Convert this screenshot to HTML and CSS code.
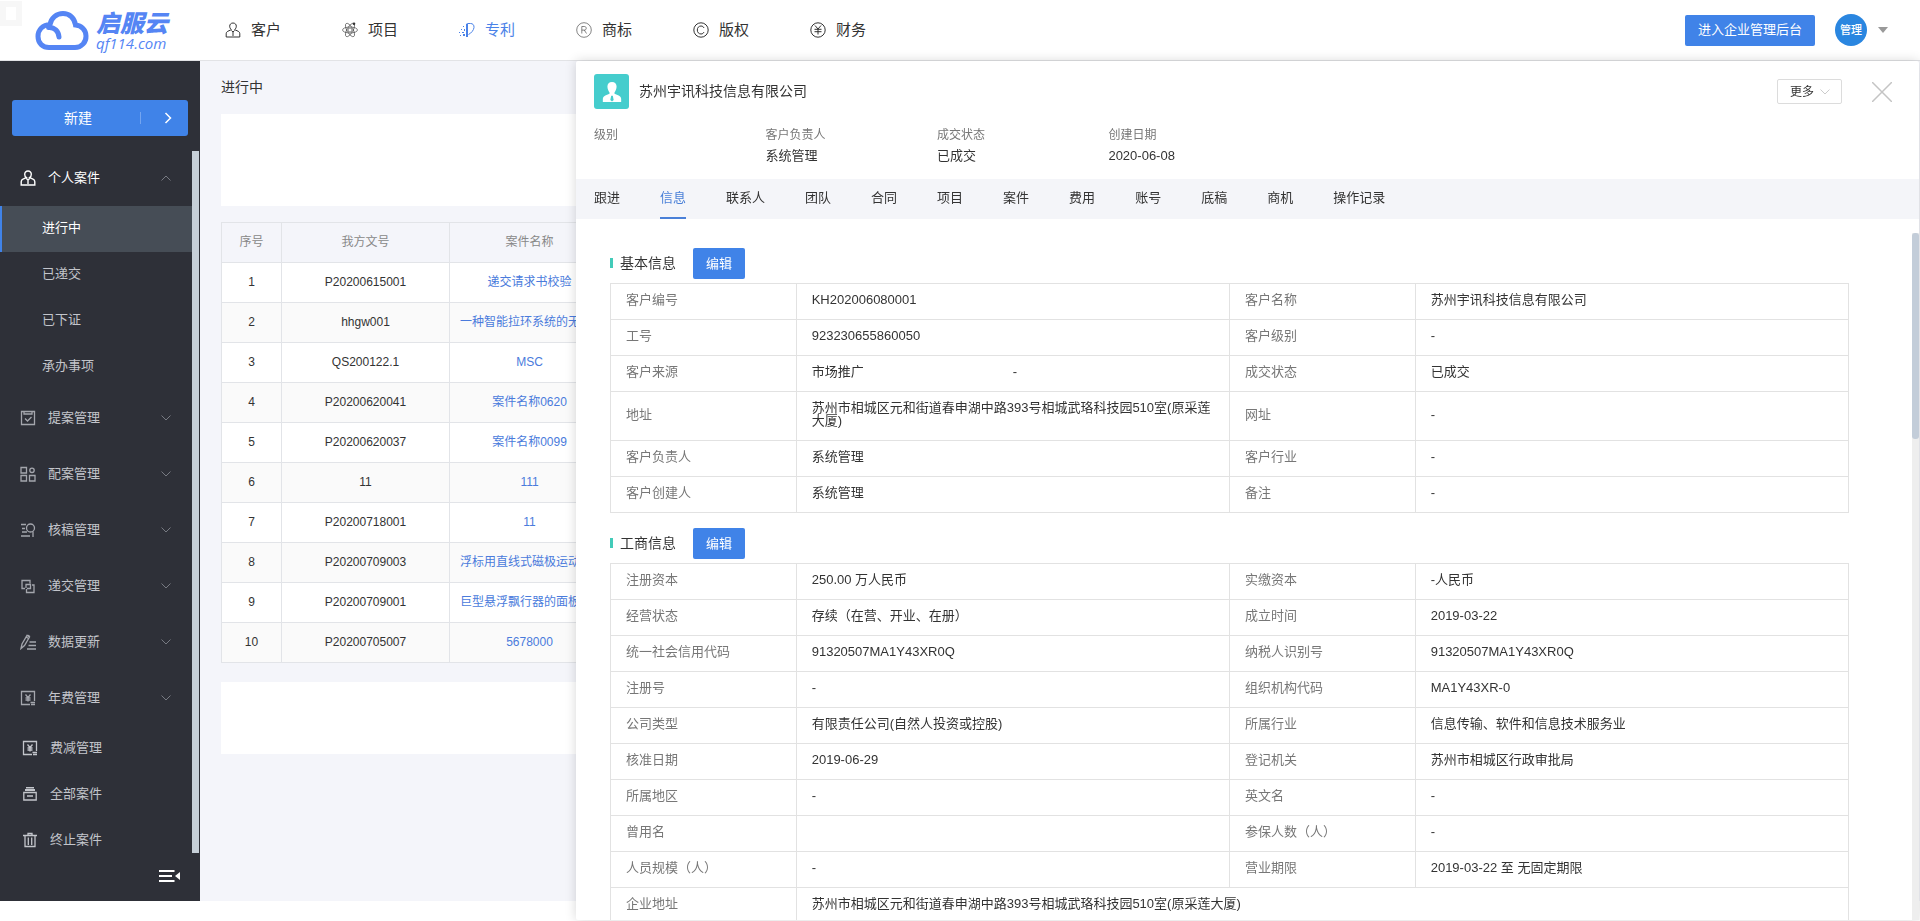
FILE: index.html
```html
<!DOCTYPE html>
<html lang="zh-CN">
<head>
<meta charset="utf-8">
<title>启服云</title>
<link rel="stylesheet" href="styles.css">
</head>
<body>
<svg class="sprite" aria-hidden="true">
  <symbol id="i-user" viewBox="0 0 16 16"><path d="M8 1C5.900 1 4.700 2.400 4.700 4.200c0 1.500.700 2.700 1.700 3.400L3 9.200c-1.100.5-1.800 1.300-1.800 2.600V15h13.600v-3.200c0-1.300-.7-2.100-1.800-2.600L9.600 7.600c1-.7 1.700-1.900 1.700-3.400C11.300 2.400 10.100 1 8 1zM6.400 8.500L8 10l1.600-1.500M8 10v4"/></symbol>
  <symbol id="i-down" viewBox="0 0 12 12"><path d="M1.500 3.500L6 8l4.500-4.500"/></symbol>
  <symbol id="i-yuan" viewBox="0 0 16 16"><path d="M14.500 11V1.500h-13v13H10M5.500 4.500L8 7.500l2.500-3M5.500 8h5M5.500 10h5M8 7.500v4M10.500 12.500H15M11 14.500h4"/></symbol>
</svg>

<header class="header">
  <span class="corner"></span>
  <a class="logo" href="#">
    <svg class="logo-cloud" viewBox="0 0 54 40"><path d="M14 36.500h26a11 11 0 0 0 11-11.500c0-6-4.500-10.500-10.500-11C39.500 7 34.500 2.500 28 2.500S16 7 15 13.500C8 14 3 18.500 3 25.500S8 36.500 14 36.500zM13.500 16.500c6-.5 10 3.500 10.500 9.500"/></svg>
    <span class="logo-text"><b>启服云</b><i>qf114.com</i></span>
  </a>
  <nav class="nav">
    <a href="#"><svg class="icon"><use href="#i-user"/></svg>客户</a>
    <a href="#"><svg class="icon thin" viewBox="0 0 16 16"><circle cx="8" cy="8" r="2"/><ellipse cx="8" cy="8" rx="7.500" ry="3"/><ellipse cx="8" cy="8" rx="7.500" ry="3" transform="rotate(60 8 8)"/><ellipse cx="8" cy="8" rx="7.500" ry="3" transform="rotate(120 8 8)"/><circle class="solid" cx="12" cy="1.800" r="1.300"/></svg>项目</a>
    <a href="#" class="active"><svg class="icon" viewBox="0 0 16 16"><path class="solid" d="M7 2l2-1v14H7zM4 4h1v1H4zM2 7h1v1H2zM5 7h1v2H5zM3 10h2v1H3zM0 10h1v1H0zM4 12h2v2H4zM1 13h1v1H1z"/><path d="M9 1.500h2.500c2.300 0 3.700 1.500 3.500 4-.3 2.600-2.500 5.500-5.500 7"/></svg>专利</a>
    <a href="#"><svg class="icon thin" viewBox="0 0 16 16"><circle cx="8" cy="8" r="7.300"/><path d="M5.800 11.500v-7h2.700c2.300 0 2.300 3.600 0 3.600H5.800M8.300 8.100l2.200 3.400"/></svg>商标</a>
    <a href="#"><svg class="icon" viewBox="0 0 16 16"><circle cx="8" cy="8" r="7.200"/><path d="M11 6C10.500 4.800 9.400 4 8 4 5.800 4 4.300 5.700 4.300 8S5.800 12 8 12c1.400 0 2.500-.8 3-2"/></svg>版权</a>
    <a href="#"><svg class="icon" viewBox="0 0 16 16"><circle cx="8" cy="8" r="7.200"/><path d="M5 3.500l3 3.500 3-3.500M4.500 7.300h7M4.500 9.700h7M8 7v5.500"/></svg>财务</a>
  </nav>
  <button class="btn enter" type="button">进入企业管理后台</button>
  <button class="account" type="button"><span class="avatar">管理</span><svg class="caret" viewBox="0 0 10 6"><path d="M0 0h10L5 6z"/></svg></button>
</header>

<div class="layout">
  <aside class="sidebar">
    <button class="create" type="button"><span>新建</span><svg class="chev" viewBox="0 0 12 12"><path d="M3.500 1L8.500 6l-5 5"/></svg></button>
    <div class="menu-wrap">
      <nav class="menu">
        <a class="group open" href="#"><svg class="icon"><use href="#i-user"/></svg><span>个人案件</span><svg class="arrow up"><use href="#i-down"/></svg></a>
        <a class="sub current" href="#">进行中</a>
        <a class="sub" href="#">已递交</a>
        <a class="sub" href="#">已下证</a>
        <a class="sub" href="#">承办事项</a>
        <a class="group" href="#"><svg class="icon" viewBox="0 0 16 16"><path d="M1.500 1.500h13v13h-13zM4 1v3h8V1M5 8.500L7.500 11l4-4"/></svg><span>提案管理</span><svg class="arrow"><use href="#i-down"/></svg></a>
        <a class="group" href="#"><svg class="icon" viewBox="0 0 16 16"><path d="M1 1.500h5.500V7H1zM1 9.500h5.500V15H1zM9.500 9.500H15V15H9.500z"/><circle cx="12" cy="4.300" r="2.200"/></svg><span>配案管理</span><svg class="arrow"><use href="#i-down"/></svg></a>
        <a class="group" href="#"><svg class="icon" viewBox="0 0 16 16"><circle cx="10.500" cy="6" r="4"/><path d="M1 2.500h5M2 6.500h3M2 10h5M1 14h9M13 9.500V15"/></svg><span>核稿管理</span><svg class="arrow"><use href="#i-down"/></svg></a>
        <a class="group" href="#"><svg class="icon" viewBox="0 0 16 16"><path d="M5 10.500H2v-8h8v3M7 10.500h3.500V6.500H6V10M12 7h2v7.500H6.500V11"/></svg><span>递交管理</span><svg class="arrow"><use href="#i-down"/></svg></a>
        <a class="group" href="#"><svg class="icon" viewBox="0 0 16 16"><path d="M1 14.500l1-4.500 5-8.500 2.500 1.500-5 8.500zM6 3l2.500 1.500M7.500 1l2.500 1.500M9.500 8H16M8.500 11.500H16M7 15h9"/></svg><span>数据更新</span><svg class="arrow"><use href="#i-down"/></svg></a>
        <a class="group" href="#"><svg class="icon"><use href="#i-yuan"/></svg><span>年费管理</span><svg class="arrow"><use href="#i-down"/></svg></a>
        <a class="single" href="#"><svg class="icon"><use href="#i-yuan"/></svg><span>费减管理</span></a>
        <a class="single" href="#"><svg class="icon" viewBox="0 0 16 16"><path class="solid" d="M4 1h8v1.500H4zM3 3h10v2H3z"/><path d="M1.800 6.500h12.400v7.500H1.800zM5 10h6"/></svg><span>全部案件</span></a>
        <a class="single" href="#"><svg class="icon" viewBox="0 0 16 16"><path d="M1 3.500h14M6 3V1.500h4V3M3 4v10.500h10V4M6.300 5.500V13M9.700 5.500V13"/></svg><span>终止案件</span></a>
      </nav>
      <div class="menu-bar"></div>
    </div>
    <button class="fold" type="button" aria-label="收起菜单"><svg viewBox="0 0 22 14"><path d="M0 2h15.500M0 7h13M0 12h15.500"/><path class="solid" d="M21 3v8l-5-4z"/></svg></button>
  </aside>

  <main class="main">
    <h1>进行中</h1>
    <div class="card filter"></div>
    <table class="cases">
      <colgroup><col class="c-no"><col class="c-ref"><col class="c-name"><col></colgroup>
      <thead><tr><th>序号</th><th>我方文号</th><th>案件名称</th><th></th></tr></thead>
      <tbody>
        <tr><td>1</td><td>P20200615001</td><td><a href="#">递交请求书校验</a></td><td></td></tr>
        <tr><td>2</td><td>hhgw001</td><td><a href="#">一种智能拉环系统的无人机</a></td><td></td></tr>
        <tr><td>3</td><td>QS200122.1</td><td><a href="#">MSC</a></td><td></td></tr>
        <tr><td>4</td><td>P20200620041</td><td><a href="#">案件名称0620</a></td><td></td></tr>
        <tr><td>5</td><td>P20200620037</td><td><a href="#">案件名称0099</a></td><td></td></tr>
        <tr><td>6</td><td>11</td><td><a href="#">111</a></td><td></td></tr>
        <tr><td>7</td><td>P20200718001</td><td><a href="#">11</a></td><td></td></tr>
        <tr><td>8</td><td>P20200709003</td><td><a href="#">浮标用直线式磁极运动发电</a></td><td></td></tr>
        <tr><td>9</td><td>P20200709001</td><td><a href="#">巨型悬浮飘行器的面板连接</a></td><td></td></tr>
        <tr><td>10</td><td>P20200705007</td><td><a href="#">5678000</a></td><td></td></tr>
      </tbody>
    </table>
    <div class="card pager"></div>
  </main>
</div>

<section class="drawer">
  <div class="drawer-head">
    <span class="badge"><svg viewBox="0 0 22 24"><path d="M11 0C7.500 0 5.500 2.200 5.500 5.500c0 2.800 1.200 5.500 2.500 7v1.500l-5 2.200C1 17.200 0 18.500 0 20.500V24h22v-3.500c0-2-1-3.300-3-4.300L14 14v-1.500c1.300-1.500 2.500-4.200 2.500-7C16.500 2.200 14.500 0 11 0z"/><path class="tie" d="M10 16.500h2l1 5-2 2-2-2z"/></svg></span>
    <h2>苏州宇讯科技信息有限公司</h2>
    <button class="more" type="button">更多<svg viewBox="0 0 12 12"><path d="M1.500 3.500L6 8l4.500-4.500"/></svg></button>
    <button class="close" type="button" aria-label="关闭"><svg viewBox="0 0 20 20"><path d="M0 0l20 20M20 0L0 20"/></svg></button>
  </div>
  <dl class="summary">
    <div><dt>级别</dt><dd></dd></div>
    <div><dt>客户负责人</dt><dd>系统管理</dd></div>
    <div><dt>成交状态</dt><dd>已成交</dd></div>
    <div><dt>创建日期</dt><dd>2020-06-08</dd></div>
  </dl>
  <nav class="tabs">
    <a href="#">跟进</a><a href="#" class="active">信息</a><a href="#">联系人</a><a href="#">团队</a><a href="#">合同</a><a href="#">项目</a><a href="#">案件</a><a href="#">费用</a><a href="#">账号</a><a href="#">底稿</a><a href="#">商机</a><a href="#">操作记录</a>
  </nav>
  <div class="body">
    <div class="content">
      <div class="section-head"><h3>基本信息</h3><button class="btn" type="button">编辑</button></div>
      <table class="info">
        <colgroup><col class="k"><col class="v"><col class="k"><col class="v"></colgroup>
        <tr><th>客户编号</th><td>KH202006080001</td><th>客户名称</th><td>苏州宇讯科技信息有限公司</td></tr>
        <tr><th>工号</th><td>923230655860050</td><th>客户级别</th><td>-</td></tr>
        <tr><th>客户来源</th><td><div class="pair"><span>市场推广</span><span>-</span></div></td><th>成交状态</th><td>已成交</td></tr>
        <tr><th>地址</th><td>苏州市相城区元和街道春申湖中路393号相城武珞科技园510室(原采莲大厦)</td><th>网址</th><td>-</td></tr>
        <tr><th>客户负责人</th><td>系统管理</td><th>客户行业</th><td>-</td></tr>
        <tr><th>客户创建人</th><td>系统管理</td><th>备注</th><td>-</td></tr>
      </table>
      <div class="section-head"><h3>工商信息</h3><button class="btn" type="button">编辑</button></div>
      <table class="info">
        <colgroup><col class="k"><col class="v"><col class="k"><col class="v"></colgroup>
        <tr><th>注册资本</th><td>250.00 万人民币</td><th>实缴资本</th><td>-人民币</td></tr>
        <tr><th>经营状态</th><td>存续（在营、开业、在册）</td><th>成立时间</th><td>2019-03-22</td></tr>
        <tr><th>统一社会信用代码</th><td>91320507MA1Y43XR0Q</td><th>纳税人识别号</th><td>91320507MA1Y43XR0Q</td></tr>
        <tr><th>注册号</th><td>-</td><th>组织机构代码</th><td>MA1Y43XR-0</td></tr>
        <tr><th>公司类型</th><td>有限责任公司(自然人投资或控股)</td><th>所属行业</th><td>信息传输、软件和信息技术服务业</td></tr>
        <tr><th>核准日期</th><td>2019-06-29</td><th>登记机关</th><td>苏州市相城区行政审批局</td></tr>
        <tr><th>所属地区</th><td>-</td><th>英文名</th><td>-</td></tr>
        <tr><th>曾用名</th><td></td><th>参保人数（人）</th><td>-</td></tr>
        <tr><th>人员规模（人）</th><td>-</td><th>营业期限</th><td>2019-03-22 至 无固定期限</td></tr>
        <tr><th>企业地址</th><td colspan="3">苏州市相城区元和街道春申湖中路393号相城武珞科技园510室(原采莲大厦)</td></tr>
      </table>
    </div>
    <div class="scroll"><div class="thumb"></div></div>
  </div>
</section>
</body>
</html>
```

FILE: styles.css
```css
* { box-sizing: border-box; }
body {
  margin: 0;
  height: 100vh;
  overflow: hidden;
  font: 13px/20px "Liberation Sans", "Noto Sans CJK SC", sans-serif;
  color: #333;
  background: #fff;
}
a { color: inherit; text-decoration: none; }
button { font: inherit; color: inherit; border: 0; padding: 0; background: none; cursor: pointer; }
h1, h2, h3, dl, dd { margin: 0; font-weight: 400; }
svg { fill: none; stroke: currentColor; flex: none; }
.solid { fill: currentColor; stroke: none; }
.sprite { position: absolute; width: 0; height: 0; }
.icon { width: 16px; height: 16px; }
.thin { stroke-width: 0.6; }
.btn {
  height: 31px;
  padding: 0 13px;
  border-radius: 2px;
  background: #4083e8;
  color: #fff;
}

.header {
  position: relative;
  display: flex;
  align-items: center;
  height: 61px;
  padding-right: 32px;
  border-bottom: 1px solid #e2e3e6;
}
.corner {
  position: absolute;
  left: 0;
  top: 1px;
  width: 22px;
  height: 25px;
  border: 6px solid #f7f7f7;
}
.logo { display: flex; align-items: center; gap: 7px; width: 195px; padding: 2px 0 0 35px; color: #5585f4; }
.logo-cloud { width: 54px; height: 40px; stroke-width: 5; stroke-linecap: round; }
.logo-text { display: flex; flex-direction: column; padding-bottom: 3px; }
.logo-text b { font: italic 900 24px/26px "Noto Sans CJK SC", sans-serif; }
.logo-text i { font: italic 400 15px/16px "Open Sans", sans-serif; }
.nav { display: flex; flex: 1; font-size: 15px; }
.nav a { display: flex; align-items: center; gap: 10px; padding: 0 31px 0 30px; }
.nav .active { color: #4a82e8; }
.enter { margin-right: 20px; }
.account { display: flex; align-items: center; gap: 11px; }
.avatar {
  width: 32px;
  border-radius: 50%;
  background: #2a86e0;
  color: #fff;
  font-size: 11px;
  font-weight: 500;
  line-height: 32px;
}
.caret { width: 10px; height: 6px; fill: #999; stroke: none; }

.layout { display: flex; height: calc(100vh - 81px); }
.sidebar {
  display: flex;
  flex-direction: column;
  width: 200px;
  flex: none;
  padding-top: 39px;
  background: #2e3038;
  color: #c3c5cb;
}
.create {
  display: flex;
  align-items: center;
  height: 36px;
  margin: 0 12px 14px;
  flex: none;
  border-radius: 3px;
  background: #4083e8;
  color: #fff;
  font-size: 14px;
}
.create span { width: 129px; padding-left: 4px; border-right: 1px solid #74a5f0; line-height: 12px; }
.create .chev { width: 12px; height: 12px; margin-left: 21px; stroke-width: 1.5; }
.menu-wrap { display: flex; flex: 1; min-height: 0; padding-right: 1px; overflow: hidden; }
.menu { flex: 1; }
.menu a { display: flex; align-items: center; padding-bottom: 2px; }
.menu-bar { width: 7px; margin-top: 1px; background: #c6cfd8; }
.menu .group { height: 56px; padding: 0 20px 1px; gap: 12px; }
.menu .group span { flex: 1; }
.menu .icon { stroke-width: 1.3; }
.menu .group .icon { color: #a4a6ad; }
.menu .open, .menu .open .icon { color: #fff; stroke-width: 1.4; }
.menu .arrow { width: 12px; height: 12px; color: #777a82; stroke-width: 1; }
.arrow.up { transform: rotate(180deg); }
.menu .sub, .menu .single { height: 46px; }
.menu .sub { padding-left: 40px; border-left: 2px solid transparent; }
.menu .current { border-color: #4083e8; background: #464d56; color: #fff; }
.menu .single { padding-left: 22px; gap: 12px; }
.fold { align-self: flex-end; height: 48px; margin-right: 19px; color: #fff; }
.fold svg { display: block; width: 22px; height: 14px; margin-bottom: 2px; stroke-width: 2; }

.main { flex: 1; min-width: 0; padding: 16px 20px 0 21px; background: #f4f5fa; }
.main h1 { margin-bottom: 17px; font-size: 14px; line-height: 20px; }
.card { background: #fff; }
.filter { height: 92px; margin-bottom: 16px; }
.pager { height: 72px; margin-top: 19px; }
table { width: 100%; border-collapse: collapse; table-layout: fixed; }
th { font-weight: 400; }
.cases { font-size: 12px; text-align: center; background: #fff; }
.cases th, .cases td {
  height: 40px;
  padding: 0 10px 2px;
  border: 1px solid #e2e4e8;
  white-space: nowrap;
}
.cases th { background: #f4f5fa; color: #888; }
.cases tbody tr:nth-child(even) { background: #fafafa; }
.cases a { color: #4a7bdc; }
.c-no { width: 60px; }
.c-ref { width: 168px; }
.c-name { width: 160px; }

.drawer {
  position: fixed;
  top: 61px;
  right: 1px;
  bottom: 1px;
  left: 30%;
  display: flex;
  flex-direction: column;
  background: #fff;
  border-radius: 2px;
  box-shadow: 0 0 12px rgba(0, 0, 0, 0.16);
}
.drawer-head { display: flex; align-items: center; padding: 13px 27px 13px 18px; }
.badge {
  display: flex;
  align-items: center;
  justify-content: center;
  width: 35px;
  height: 35px;
  border-radius: 3px;
  background: #45cdcd;
}
.badge svg { width: 20px; height: 20px; fill: #fff; stroke: none; }
.badge .tie { fill: #45cdcd; }
.drawer-head h2 { flex: 1; padding: 0 0 2px 10px; font-size: 14px; }
.more {
  display: flex;
  align-items: center;
  gap: 5px;
  height: 25px;
  padding: 0 10px 0 12px;
  border: 1px solid #dcdcdc;
  border-radius: 2px;
  font-size: 12px;
}
.more svg { width: 12px; height: 12px; color: #ccc; }
.close { margin-left: 30px; color: #c4c4c4; }
.close svg { display: block; width: 20px; height: 20px; stroke-width: 1.5; }
.summary { display: flex; padding: 3px 6px 11px 18px; }
.summary > div { width: 13%; height: 43px; }
.summary dt { color: #777; font-size: 12px; line-height: 21px; }
.summary dd { line-height: 20px; }
.tabs { display: flex; gap: 40px; padding: 0 18px; background: #f4f5f9; }
.tabs a { padding: 9px 0; border-bottom: 2px solid transparent; }
.tabs .active { border-color: #4a80d8; color: #4a80d8; }
.body { display: flex; flex: 1; min-height: 0; overflow: hidden; }
.content { flex: 1; padding: 17px 63px 0 34px; }
.scroll { width: 7px; margin-top: 14px; background: #eee; }
.thumb { height: 30%; border-radius: 3px; background: #c3cdd9; }
.section-head { display: flex; align-items: center; padding: 12px 0 4px; }
.content .info + .section-head { padding-top: 15px; }
.section-head h3 { display: flex; align-items: center; gap: 7px; margin-right: 17px; padding-bottom: 2px; font-size: 14px; }
.section-head h3::before { content: ""; width: 3px; height: 10px; background: #43cbb9; }
.info { text-align: left; line-height: 13px; }
.info th, .info td { height: 36px; padding: 9px 15px 13px; border: 1px solid #e2e2e2; }
.info th { color: #777; }
.k { width: 15%; }
.v { width: 35%; }
.pair { display: grid; grid-template-columns: 1fr 1fr; }
```
